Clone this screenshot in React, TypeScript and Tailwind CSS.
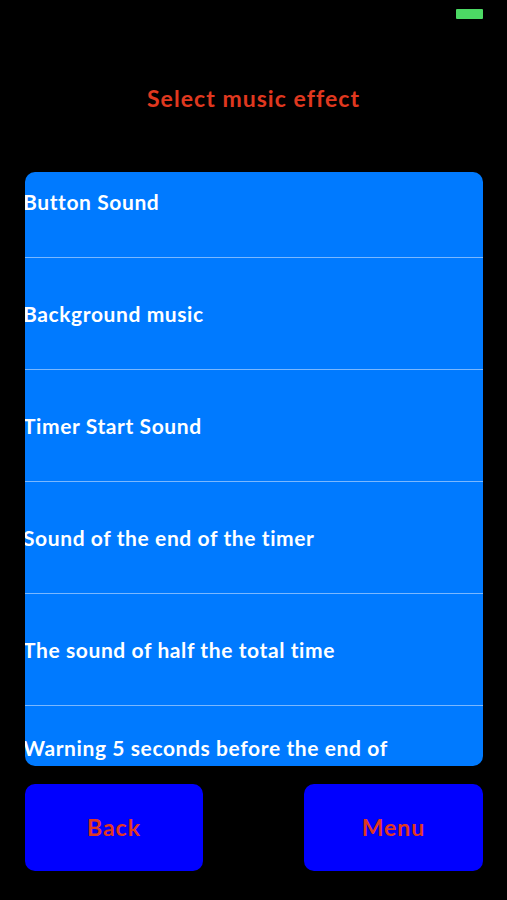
const FONT = "font-['Lato','Liberation_Sans',sans-serif]"

const ROWS = [
  'Button Sound',
  'Background music',
  'Timer Start Sound',
  'Sound of the end of the timer',
  'The sound of half the total time',
  'Warning 5 seconds before the end of the timer',
]

export default function App() {
  return (
    <div className={`${FONT} relative flex h-[900px] w-[507px] flex-col overflow-hidden bg-black`}>
      {/* Status bar battery */}
      <div className="flex h-[19px] items-end justify-end pr-[24px]">
        <div className="h-[10px] w-[27px] rounded-[1px] bg-[#4cd964]" />
      </div>

      <h1 className="mt-[63px] h-[32px] text-center text-[23px] font-bold leading-[32px] tracking-[1.05px] text-[#e0381f]">
        Select music effect
      </h1>

      {/* Effect list, scrolled a little */}
      <div className="ml-[25px] mr-[24px] mt-[58px] h-[594px] overflow-hidden rounded-[10px] bg-[#007aff]">
        <div className="-mt-[26px] -ml-[2px]">
          {ROWS.map((label, i) => (
            <div
              key={label}
              className="relative flex h-[112px] items-center text-[21px] font-bold leading-[28px] tracking-[0.6px] text-white"
            >
              <span className="w-[375px]">{label}</span>
              {i < ROWS.length - 1 && (
                <div className="absolute bottom-0 left-[2px] h-px w-[458px] bg-[#7ab8ff]" />
              )}
            </div>
          ))}
        </div>
      </div>

      {/* Bottom buttons */}
      <div className="ml-[25px] mr-[24px] mt-[18px] flex justify-between">
        <button className="h-[87px] w-[178px] rounded-[10px] bg-[#0000ff] text-[23px] font-bold tracking-[1px] text-[#e0381f]">
          Back
        </button>
        <button className="h-[87px] w-[179px] rounded-[10px] bg-[#0000ff] text-[23px] font-bold tracking-[1px] text-[#e0381f]">
          Menu
        </button>
      </div>
    </div>
  )
}
